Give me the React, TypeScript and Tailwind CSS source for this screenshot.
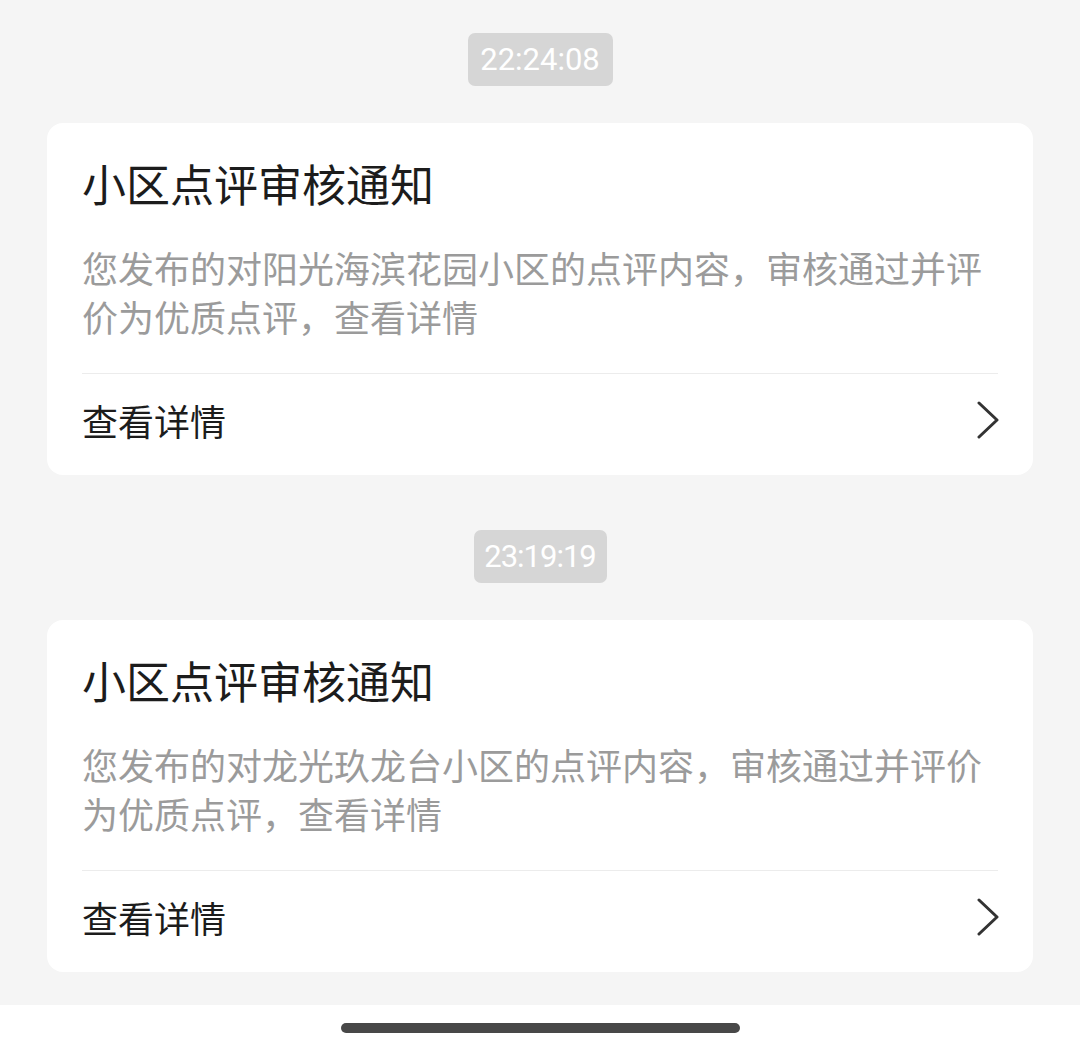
import React from "react";

const CJK = '"Noto Sans CJK SC", "Noto Sans", sans-serif';

function Chevron() {
  return (
    <svg width="24" height="40" viewBox="0 0 24 40" fill="none" className="mr-[-1px]">
      <path d="M4 3 L22 20 L4 37" stroke="#333333" strokeWidth="3" strokeLinecap="round" strokeLinejoin="round" />
    </svg>
  );
}

function Stamp({ time, w }: { time: string; w: string }) {
  return (
    <div className="flex justify-center">
      <div
        className={`h-[53px] ${w} rounded-[7px] bg-[#d6d6d6] text-white text-[31px] leading-[53px] text-center`}
        style={{ fontFamily: 'Roboto, "Noto Sans", sans-serif' }}
      >
        {time}
      </div>
    </div>
  );
}

function Card({ desc }: { desc: string }) {
  return (
    <div className="mx-[47px] bg-white rounded-[16px] px-[35px] pt-[30px] pb-[9px]" style={{ fontFamily: CJK }}>
      <div className="text-[44px] leading-[60px] text-[#1c1c1c]">小区点评审核通知</div>
      <div className="mt-[30px] text-[36px] leading-[49px] text-[#9b9b9b]">{desc}</div>
      <div className="mt-[32px] h-px bg-[#ececec]" />
      <div className="h-[92px] flex items-center justify-between">
        <span className="text-[36px] text-[#1c1c1c]">查看详情</span>
        <Chevron />
      </div>
    </div>
  );
}

export default function App() {
  return (
    <div className="w-[1080px] h-[1050px] bg-[#f5f5f5] flex flex-col overflow-hidden">
      <div className="pt-[33px]">
        <Stamp time="22:24:08" w="w-[145px]" />
      </div>
      <div className="mt-[37px]">
        <Card desc="您发布的对阳光海滨花园小区的点评内容，审核通过并评价为优质点评，查看详情" />
      </div>
      <div className="mt-[55px]">
        <Stamp time="23:19:19" w="w-[133px] tracking-[-1px]" />
      </div>
      <div className="mt-[37px]">
        <Card desc="您发布的对龙光玖龙台小区的点评内容，审核通过并评价为优质点评，查看详情" />
      </div>
      <div className="flex-1" />
      <div className="h-[45px] bg-white flex justify-center pt-[18px]">
        <div className="w-[399px] h-[10px] rounded-full bg-[#484848]" />
      </div>
    </div>
  );
}
